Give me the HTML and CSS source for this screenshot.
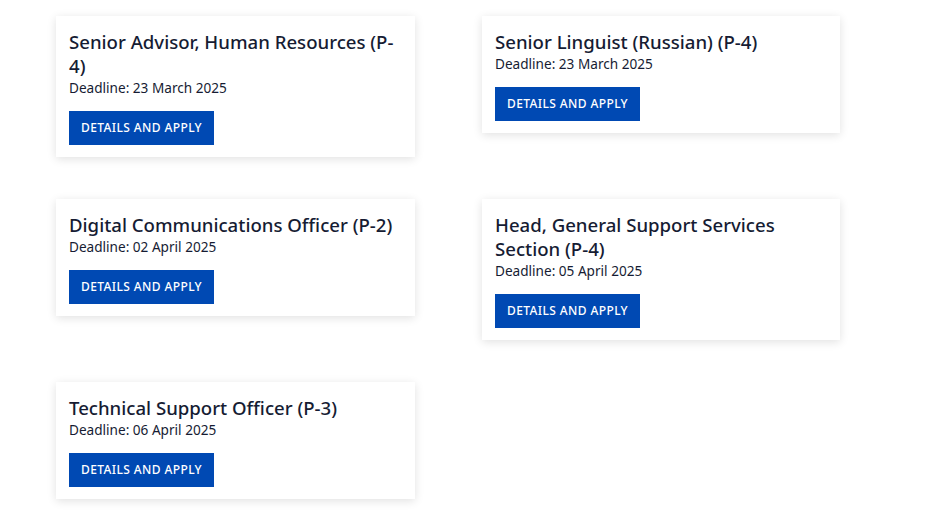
FILE: index.html
```html
<!DOCTYPE html>
<html lang="en">
<head>
<meta charset="utf-8">
<title>Vacancies</title>
<link rel="stylesheet" href="styles.css">
</head>
<body>
<main class="jobs">
  <article class="job">
    <h3 class="job-title">Senior Advisor, Human Resources (P-4)</h3>
    <p class="job-deadline">Deadline: 23 March 2025</p>
    <a class="job-btn" href="#">DETAILS AND APPLY</a>
  </article>
  <article class="job">
    <h3 class="job-title">Senior Linguist (Russian) (P-4)</h3>
    <p class="job-deadline">Deadline: 23 March 2025</p>
    <a class="job-btn" href="#">DETAILS AND APPLY</a>
  </article>
  <article class="job">
    <h3 class="job-title">Digital Communications Officer (P-2)</h3>
    <p class="job-deadline">Deadline: 02 April 2025</p>
    <a class="job-btn" href="#">DETAILS AND APPLY</a>
  </article>
  <article class="job">
    <h3 class="job-title">Head, General Support Services Section (P-4)</h3>
    <p class="job-deadline">Deadline: 05 April 2025</p>
    <a class="job-btn" href="#">DETAILS AND APPLY</a>
  </article>
  <article class="job">
    <h3 class="job-title">Technical Support Officer (P-3)</h3>
    <p class="job-deadline">Deadline: 06 April 2025</p>
    <a class="job-btn" href="#">DETAILS AND APPLY</a>
  </article>
</main>
</body>
</html>
```
FILE: styles.css
```css
* { box-sizing: border-box; }
html, body { margin: 0; background: #ffffff; }
body {
  font-family: "Noto Sans", "Liberation Sans", sans-serif;
  color: #161c33;
  padding: 16px 0 24px 56px;
}
.jobs {
  display: grid;
  grid-template-columns: 359px 358px;
  column-gap: 67px;
  row-gap: 42px;
  align-items: start;
}
.job {
  background: #fff;
  padding: 14px 13px 12px;
  box-shadow: 0 2px 9px rgba(0, 0, 0, 0.12);
}
.job-title {
  margin: 0;
  font-size: 18.6px;
  line-height: 24px;
  font-weight: 500;
}
.job-deadline {
  margin: 0;
  font-size: 13.6px;
  line-height: 19px;
}
.job-btn {
  display: inline-block;
  margin-top: 14px;
  height: 34px;
  line-height: 34px;
  padding: 0 12px;
  background: #0049b3;
  color: #fff;
  text-decoration: none;
  font-size: 12px;
  font-weight: 500;
  letter-spacing: 0.4px;
}
```
